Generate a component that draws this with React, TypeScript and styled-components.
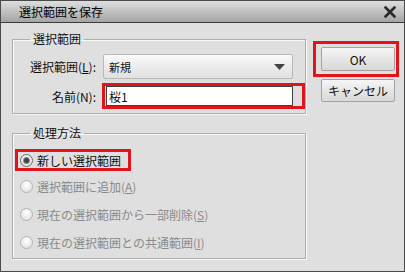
import React from "react";
import styled, { createGlobalStyle } from "styled-components";

const Global = createGlobalStyle`
  html, body { margin: 0; padding: 0; background: #dfdfdf; }
  * { box-sizing: border-box; }
  body { font-family: "Noto Sans CJK JP", "Liberation Sans", sans-serif; font-size: 12px; color: #111; }
`;

const Window = styled.div`
  width: 405px;
  height: 272px;
  border: 1px solid #4a4a4a;
  background: #dfdfdf;
  display: flex;
  flex-direction: column;
`;

const TitleBar = styled.div`
  height: 22px;
  flex: none;
  display: flex;
  align-items: center;
  justify-content: space-between;
  padding: 0 8px 0 18px;
  background: linear-gradient(#dedede, #c4c4c4 45%, #a4a4a4);
  border-bottom: 1px solid #3c3c3c;
  font-size: 12px;
  color: #000;
`;

const Body = styled.div`
  flex: 1;
  display: flex;
  align-items: flex-start;
  padding: 8px 0 0 11px;
  gap: 7px;
`;

const LeftCol = styled.div`
  width: 294px;
  display: flex;
  flex-direction: column;
  gap: 11px;
`;

const Group = styled.fieldset`
  margin: 0;
  padding: 0;
  border: 1px solid #aeaeae;
  box-shadow: 1px 1px 0 #f8f8f8, inset 1px 1px 0 #f8f8f8;
  min-width: 0;
`;

const Legend = styled.legend`
  margin-left: 17px;
  padding: 0 3px;
  line-height: 16px;
  font-size: 12px;
`;

const FormGrid = styled.div`
  display: grid;
  grid-template-columns: 83px auto;
  column-gap: 6px;
  row-gap: 4px;
  align-items: center;
  padding: 7px 0 4px;
`;

const FieldLabel = styled.span`
  justify-self: end;
  white-space: nowrap;
`;

const Select = styled.div`
  margin-left: 1px;
  width: 190px;
  height: 25px;
  border: 1px solid #b9b9b9;
  border-radius: 2px;
  background: linear-gradient(#fafafa, #ececec 50%, #e0e0e0);
  display: flex;
  align-items: center;
  justify-content: space-between;
  padding: 0 7px 0 5px;
  font-size: 11px;
`;

const Highlight = styled.div<{ $pad: string }>`
  border: 3px solid #e0141a;
  padding: ${(p) => p.$pad};
  display: inline-flex;
  align-items: center;
`;

const TextInput = styled.div`
  width: 187px;
  height: 20px;
  border: 1px solid #3f3f3f;
  background: #fff;
  display: flex;
  align-items: center;
  padding-left: 2px;
  font-size: 12px;
`;

const RadioList = styled.div`
  display: flex;
  flex-direction: column;
  align-items: flex-start;
  padding: 8px 0 5px 2px;
`;

const RadioRow = styled.div<{ $gap: number; $active?: boolean; $marked?: boolean }>`
  margin-top: ${(p) => p.$gap}px;
  height: 22px;
  border: 3px solid ${(p) => (p.$marked ? "#e0141a" : "transparent")};
  padding: 0 7px 0 2px;
  display: flex;
  align-items: center;
  gap: 4px;
  color: ${(p) => (p.$active ? "#111" : "#8a8a8a")};
  white-space: nowrap;
`;

const RadioCircle = styled.span<{ $checked?: boolean }>`
  width: 13px;
  height: 13px;
  border-radius: 50%;
  border: 1px solid ${(p) => (p.$checked ? "#6d6d6d" : "#b3b3b3")};
  background: radial-gradient(circle at 50% 35%, #ffffff, #e4e4e4 75%, #cfcfcf);
  display: flex;
  align-items: center;
  justify-content: center;
  flex: none;
  &::after {
    content: "";
    display: ${(p) => (p.$checked ? "block" : "none")};
    width: 5px;
    height: 5px;
    border-radius: 50%;
    background: #444;
    box-shadow: 0 0 0 1px #8a8a8a;
  }
`;

const Underline = styled.span`
  text-decoration: underline;
`;

const RightCol = styled.div`
  display: flex;
  flex-direction: column;
  align-items: flex-start;
  padding-top: 10px;
`;

const Button = styled.div<{ $h: number }>`
  width: 74px;
  height: ${(p) => p.$h}px;
  border: 1px solid #a3a3a3;
  border-radius: 2px;
  background: linear-gradient(#f6f6f6, #e6e6e6 50%, #d9d9d9);
  display: flex;
  align-items: center;
  justify-content: center;
  font-size: 12px;
  color: #111;
`;

const CancelButton = styled(Button)`
  margin: 2px 0 0 8px;
`;

const Arrow = () => (
  <svg width="11" height="6" viewBox="0 0 11 6">
    <path d="M0 0H11L5.5 6Z" fill="#444" />
  </svg>
);

const CloseIcon = () => (
  <svg width="12" height="12" viewBox="0 0 12 12">
    <path d="M1.5 1.5L10.5 10.5M10.5 1.5L1.5 10.5" stroke="#2a2a2a" strokeWidth="2.6" strokeLinecap="round" />
  </svg>
);

export default function App() {
  return (
    <>
      <Global />
      <Window>
        <TitleBar>
          <span>選択範囲を保存</span>
          <CloseIcon />
        </TitleBar>
        <Body>
          <LeftCol>
            <Group>
              <Legend>選択範囲</Legend>
              <FormGrid>
                <FieldLabel>
                  選択範囲(<Underline>L</Underline>):
                </FieldLabel>
                <Select>
                  <span>新規</span>
                  <Arrow />
                </Select>
                <FieldLabel>名前(N):</FieldLabel>
                <Highlight $pad="0 1px">
                  <TextInput>桜1</TextInput>
                </Highlight>
              </FormGrid>
            </Group>
            <Group>
              <Legend>処理方法</Legend>
              <RadioList>
                <RadioRow $gap={0} $active $marked>
                  <RadioCircle $checked />
                  新しい選択範囲
                </RadioRow>
                <RadioRow $gap={4}>
                  <RadioCircle />
                  <span>
                    選択範囲に追加(<Underline>A</Underline>)
                  </span>
                </RadioRow>
                <RadioRow $gap={6}>
                  <RadioCircle />
                  <span>
                    現在の選択範囲から一部削除(<Underline>S</Underline>)
                  </span>
                </RadioRow>
                <RadioRow $gap={6}>
                  <RadioCircle />
                  <span>
                    現在の選択範囲との共通範囲(<Underline>I</Underline>)
                  </span>
                </RadioRow>
              </RadioList>
            </Group>
          </LeftCol>
          <RightCol>
            <Highlight $pad="3px 1px 3px 5px">
              <Button $h={24}>OK</Button>
            </Highlight>
            <CancelButton $h={23}>キャンセル</CancelButton>
          </RightCol>
        </Body>
      </Window>
    </>
  );
}
